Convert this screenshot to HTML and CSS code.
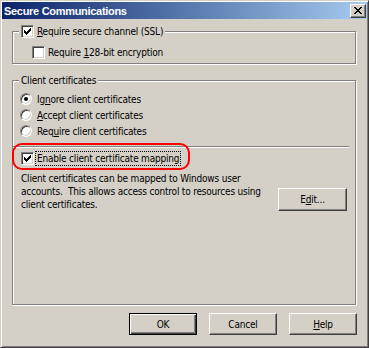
FILE: index.html
```html
<!DOCTYPE html>
<html lang="en">
<head>
    <meta charset="UTF-8">
    <title>Secure Communications</title>
    <link rel="stylesheet" href="styles.css">
</head>
<body>

    <div class="window">
        <div class="titlebar">
            <span class="title">Secure Communications</span>
            <button class="close" type="button" aria-label="Close">
                <svg width="8" height="7" viewBox="0 0 8 7" shape-rendering="crispEdges">
                    <path d="M0 0h2v1h-2z M6 0h2v1h-2z M1 1h2v1h-2z M5 1h2v1h-2z M2 2h4v1h-4z M3 3h2v1h-2z M2 4h4v1h-4z M1 5h2v1h-2z M5 5h2v1h-2z M0 6h2v1h-2z M6 6h2v1h-2z" fill="#000"/>
                </svg>
            </button>
        </div>

        <div class="content">
            <fieldset class="group ssl">
                <legend>
                    <span class="option">
                        <span class="checkbox checked"></span>
                        <span><u>R</u>equire secure channel (SSL)</span>
                    </span>
                </legend>
                <div class="option sub">
                    <span class="checkbox"></span>
                    <span>Require <u>1</u>28-bit encryption</span>
                </div>
            </fieldset>

            <fieldset class="group certs">
                <legend class="text-legend">Client certificates</legend>
                <div class="radios">
                    <div class="radio-row"><span class="radio selected"></span><span>Ig<u>n</u>ore client certificates</span></div>
                    <div class="radio-row"><span class="radio"></span><span><u>A</u>ccept client certificates</span></div>
                    <div class="radio-row"><span class="radio"></span><span>Req<u>u</u>ire client certificates</span></div>
                </div>

                <div class="separator"></div>

                <div class="mapping">
                    <span class="checkbox checked"></span>
                    <span class="focus">Enable client certificate mapping</span>
                    <span class="annotation"></span>
                </div>

                <div class="mapping-info">
                    <p>Client certificates can be mapped to Windows user<br>accounts.&nbsp; This allows access control to resources using<br>client certificates.</p>
                    <button type="button" class="btn edit">E<u>d</u>it...</button>
                </div>
            </fieldset>

            <div class="actions">
                <button type="button" class="btn default">OK</button>
                <button type="button" class="btn">Cancel</button>
                <button type="button" class="btn"><u>H</u>elp</button>
            </div>
        </div>
    </div>

</body>
</html>
```

FILE: styles.css
```css
body {
    margin: 0;
    font-family: "DejaVu Sans Condensed", "Liberation Sans", sans-serif;
    font-size: 10px;
    letter-spacing: -0.2px;
    color: #000;
}

.window {
    width: 369px;
    height: 348px;
    box-sizing: border-box;
    display: flex;
    flex-direction: column;
    padding: 1px;
    background: #d4d0c8;
    border: 1px solid;
    border-color: #d4d0c8 #404040 #404040 #d4d0c8;
    box-shadow: inset 1px 1px 0 #fff, inset -1px -1px 0 #808080;
}

.titlebar {
    height: 17px;
    display: flex;
    align-items: center;
    justify-content: space-between;
    padding: 0 1px 0 2px;
    background: linear-gradient(to right, #0a246a, #a6caf0);
}

.title {
    color: #fff;
    font-family: "Liberation Sans", sans-serif;
    font-weight: bold;
    font-size: 11px;
    letter-spacing: -0.3px;
}

.close {
    width: 16px;
    height: 14px;
    padding: 0;
    display: flex;
    align-items: center;
    justify-content: center;
    background: #d4d0c8;
    border: 1px solid;
    border-color: #fff #404040 #404040 #fff;
    box-shadow: inset -1px -1px 0 #808080;
}

.content {
    flex: 1;
    display: flex;
    flex-direction: column;
    padding: 6px 11px 11px 10px;
}

.group {
    margin: 0;
    padding: 0;
    min-width: 0;
    border: 1px solid #808080;
    box-shadow: 1px 1px 0 #fff, inset 1px 1px 0 #fff;
}

.group legend {
    margin-left: 6px;
    padding: 0 2px;
    background: #d4d0c8;
}

.text-legend {
    height: 13px;
    line-height: 13px;
}

.certs {
    flex: 1;
    margin-top: 10px;
}

.option {
    display: flex;
    align-items: center;
    gap: 3px;
    height: 13px;
}

.option.sub {
    margin: 8px 0 4px 19px;
}

.checkbox {
    width: 13px;
    height: 13px;
    box-sizing: border-box;
    flex: none;
    background: #fff;
    border: 1px solid;
    border-color: #808080 #fff #fff #808080;
    box-shadow: inset 1px 1px 0 #404040, inset -1px -1px 0 #d4d0c8;
}

.checkbox.checked {
    background: #fff url("data:image/svg+xml,%3Csvg xmlns='http://www.w3.org/2000/svg' width='11' height='11' shape-rendering='crispEdges'%3E%3Cpath d='M2 4h1v3h-1z M3 5h1v3h-1z M4 6h1v3h-1z M5 5h1v3h-1z M6 4h1v3h-1z M7 3h1v3h-1z M8 2h1v3h-1z' fill='%23000'/%3E%3C/svg%3E") no-repeat 0 0;
}

.radios {
    margin: 4px 0 0 7px;
}

.radio-row {
    display: flex;
    align-items: center;
    gap: 5px;
    height: 16px;
}

.radio {
    width: 12px;
    height: 12px;
    box-sizing: border-box;
    flex: none;
    position: relative;
    border-radius: 50%;
    background: #fff;
    border: 1px solid;
    border-color: #808080 #fff #fff #808080;
    box-shadow: inset 1px 1px 0 #404040, inset -1px -1px 0 #d4d0c8;
}

.radio.selected::after {
    content: "";
    position: absolute;
    left: 3px;
    top: 3px;
    width: 4px;
    height: 4px;
    border-radius: 50%;
    background: #000;
}

.separator {
    height: 0;
    margin: 7px 6px 0 0;
    border-top: 1px solid #808080;
    border-bottom: 1px solid #fff;
}

.mapping {
    position: relative;
    display: flex;
    align-items: center;
    height: 15px;
    margin: 3px 0 0 8px;
}

.focus {
    margin-left: 1px;
    padding: 0 1px;
    line-height: 13px;
    border: 1px dotted #000;
}

.annotation {
    position: absolute;
    left: -9px;
    top: -8px;
    width: 174px;
    height: 23px;
    border: 2px solid #f00;
    border-radius: 10px;
}

.mapping-info {
    display: flex;
    align-items: flex-end;
    justify-content: space-between;
    margin: 6px 8px 0 8px;
}

.mapping-info p {
    margin: 0;
    line-height: 13px;
    white-space: nowrap;
}

.btn {
    width: 68px;
    height: 22px;
    padding: 0;
    font: inherit;
    letter-spacing: inherit;
    color: #000;
    background: #d4d0c8;
    border: 1px solid;
    border-color: #fff #404040 #404040 #fff;
    box-shadow: inset -1px -1px 0 #808080;
}

.btn.edit {
    width: 69px;
    height: 23px;
}

.btn.default {
    border-color: #000;
    box-shadow: inset 1px 1px 0 #fff, inset -1px -1px 0 #404040, inset -2px -2px 0 #808080;
}

.actions {
    display: flex;
    justify-content: flex-end;
    gap: 12px;
    margin: 8px -1px 0 0;
}
```
